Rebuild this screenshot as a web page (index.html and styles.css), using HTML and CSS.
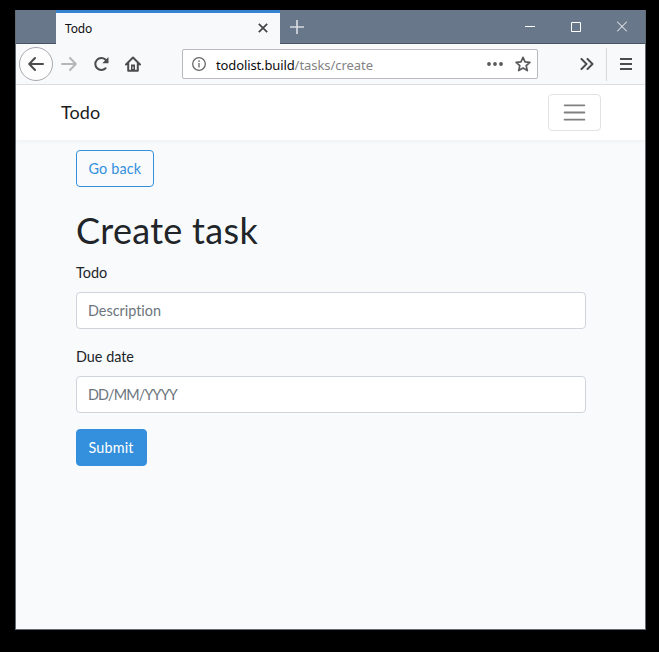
FILE: index.html
```html
<!DOCTYPE html>
<html lang="en">
<head>
<meta charset="utf-8">
<title>Todo</title>
<link rel="stylesheet" href="styles.css">
</head>
<body>
<div class="window">
  <header class="tabs">
    <div class="tab"><span class="tab-title">Todo</span>
      <svg class="tab-close" width="10" height="10" viewBox="0 0 10 10"><path d="M.8.8l8.400 8.400M9.200.8L.8 9.200"/></svg>
    </div>
    <svg class="new-tab" width="14" height="14" viewBox="0 0 14 14"><path d="M7 0v14M0 7h14"/></svg>
    <div class="controls">
      <svg width="10" height="11" viewBox="0 0 10 11"><path d="M0 5.500h10"/></svg>
      <svg width="10" height="11" viewBox="0 0 10 11"><path d="M.5 1.500h9v9h-9z"/></svg>
      <svg width="10" height="11" viewBox="0 0 10 11"><path d="M0 .5l10 10M10 .5l-10 10"/></svg>
    </div>
  </header>
  <div class="toolbar">
    <span class="back"><svg class="icon" width="16" height="16" viewBox="0 0 16 16"><path d="M15 8H1.500M7 2L1.200 8 7 14"/></svg></span>
    <svg class="icon forward" width="16" height="16" viewBox="0 0 16 16"><path d="M1 8h13.500M9 2l5.800 6L9 14"/></svg>
    <svg class="icon reload" width="16" height="16" viewBox="0 0 16 16"><path d="M12.600 12.200A6 6 0 1 1 12.400 3.600L14 5.400"/><path class="solid" d="M15.500 1v6.200H9.300z"/></svg>
    <svg class="icon home" width="16" height="16" viewBox="0 0 16 16"><path d="M1 8.500L8 1.500l7 7M3.200 7.500v7.300h9.600V7.500"/><path class="solid" d="M6 8.500h4V15H6z"/><path class="knob" d="M8 11v1.500"/></svg>
    <div class="address">
      <svg class="info" width="14" height="14" viewBox="0 0 14 14"><circle cx="7" cy="7" r="6.300"/><path d="M7 6v4.500M7 3.300v1.600"/></svg>
      <span class="url"><span class="host">todolist.build</span><span class="path">/tasks/create</span></span>
      <svg class="dots" width="16" height="4" viewBox="0 0 16 4"><circle cx="2" cy="2" r="1.900"/><circle cx="8" cy="2" r="1.900"/><circle cx="14" cy="2" r="1.900"/></svg>
      <svg class="icon star" width="16" height="16" viewBox="0 0 16 16"><path d="M8 1.300l2 4.500 4.900.5-3.700 3.300 1.100 5L8 12.100l-4.300 2.500 1.100-5L1.100 6.300 6 5.800z"/></svg>
    </div>
    <svg class="icon more" width="14" height="12" viewBox="0 0 14 12"><path d="M1.500 1l5 5-5 5M7.500 1l5 5-5 5"/></svg>
    <span class="divider"></span>
    <svg class="icon menu" width="12" height="12" viewBox="0 0 12 12"><path d="M.5 1h11M.5 6h11M.5 11h11"/></svg>
  </div>
  <nav class="navbar">
    <span class="brand">Todo</span>
    <button class="toggler" aria-label="Menu"><svg width="27" height="27" viewBox="0 0 30 30"><path d="M4 7h22M4 15h22M4 23h22"/></svg></button>
  </nav>
  <main class="content">
    <a class="btn btn-outline">Go back</a>
    <h1>Create task</h1>
    <form>
      <label for="todo">Todo</label>
      <input id="todo" type="text" placeholder="Description">
      <label for="due">Due date</label>
      <input id="due" class="date" type="text" placeholder="DD/MM/YYYY">
      <button class="btn btn-primary" type="button">Submit</button>
    </form>
  </main>
</div>
</body>
</html>
```
FILE: styles.css
```css
* { box-sizing: border-box; }
body { margin: 0; padding: 10px 13px 22px 15px; height: 652px; background: #000; overflow: hidden; font-family: Lato, sans-serif; }
svg { display: block; flex: none; fill: none; }
.window { width: 631px; height: 620px; border: 1px solid #636b73; border-top: 0; background: #f8fafc; }
.tabs { height: 34px; background: #68778a; display: flex; padding-left: 40px; border-bottom: 1px solid #485260; }
.tab { width: 224px; height: 34px; background: #f8f9fb; border-top: 3px solid #3583d1; display: flex; align-items: center; justify-content: space-between; padding: 0 12px 1px 9px; }
.tab-title { font: 12px "Noto Sans", sans-serif; letter-spacing: -.15px; color: #0c0c0d; padding-top: 1px; }
.tab-close { stroke: #444447; stroke-width: 1.700; }
.new-tab { margin: 10px 0 0 10px; stroke: #d5dae0; stroke-width: 1.700; }
.controls { margin-left: auto; display: flex; gap: 36px; padding: 11px 18px 0 0; stroke: #fff; stroke-width: 1; }
.toolbar { height: 41px; display: flex; align-items: center; background: #f8f9fb; border-bottom: 1px solid #dedfe1; padding-left: 3px; }
.icon { stroke: #4c4c4f; stroke-width: 2; stroke-linecap: round; stroke-linejoin: round; }
.back { width: 34px; height: 34px; flex: none; border: 1px solid #a9a9ad; border-radius: 50%; background: #fdfdfe; display: flex; align-items: center; justify-content: center; }
.forward { margin-left: 8px; stroke: #b5b6b8; }
.reload { margin-left: 16px; }
.solid { fill: #4c4c4f; stroke: none; }
.home { margin-left: 16px; }
.knob { stroke: #f8f9fb; stroke-width: 1; }
.address { width: 356px; height: 30px; margin-left: 41px; border: 1px solid #b9babd; border-radius: 2px; background: #fff; display: flex; align-items: center; padding: 0 6px 0 9px; }
.info { stroke: #68686b; stroke-width: 1.300; }
.url { margin-left: 10px; font: 13px/18px "Noto Sans", sans-serif; white-space: nowrap; padding-top: 1px; }
.host { color: #0c0c0d; letter-spacing: -.12px; }
.path { color: #838386; letter-spacing: -.05px; }
.dots { margin-left: auto; fill: #58585b; }
.star { margin-left: 12px; stroke: #58585b; stroke-width: 1.700; }
.more { margin-left: 42px; }
.divider { width: 1px; height: 33px; background: #d7d8da; margin-left: 12px; }
.menu { margin-left: 13px; }
.navbar { height: 55px; background: #fff; box-shadow: 0 2px 4px rgba(0,0,0,.04); display: flex; align-items: center; justify-content: space-between; padding: 0 44px 0 45px; }
.brand { font-size: 18px; color: #1c1c1c; padding-bottom: 2px; letter-spacing: .1px; }
.toggler { width: 53px; height: 37px; padding: 0 12px; background: #fff; border: 1px solid #e2e2e2; border-radius: 4px; }
.toggler svg { stroke: #808080; stroke-width: 2; stroke-linecap: round; }
.content { width: 510px; margin: 10px 0 0 60px; color: #212529; font-size: 14.400px; line-height: 23px; }
.btn { display: flex; align-items: center; height: 37px; border: 1px solid #3490dc; border-radius: 4px; padding: 0 0 0 11.500px; font: 14.400px/23px Lato, sans-serif; letter-spacing: .15px; }
.btn-outline { width: 78px; color: #3490dc; }
.btn-primary { width: 71px; background: #3490dc; color: #fff; }
h1 { margin: 22px 0 9px; font-size: 36px; line-height: 43px; font-weight: 400; letter-spacing: .3px; }
label { display: block; margin-bottom: 7px; height: 24px; line-height: 24px; }
input { display: block; width: 510px; height: 37px; margin: 0 0 16px; padding: 0 11px; border: 1px solid #ced4da; border-radius: 4px; background: #fff; font: 14.400px Lato, sans-serif; font-variant-ligatures: none; }
.date { letter-spacing: -.85px; }
input::placeholder { color: #6c757d; opacity: 1; }
```
